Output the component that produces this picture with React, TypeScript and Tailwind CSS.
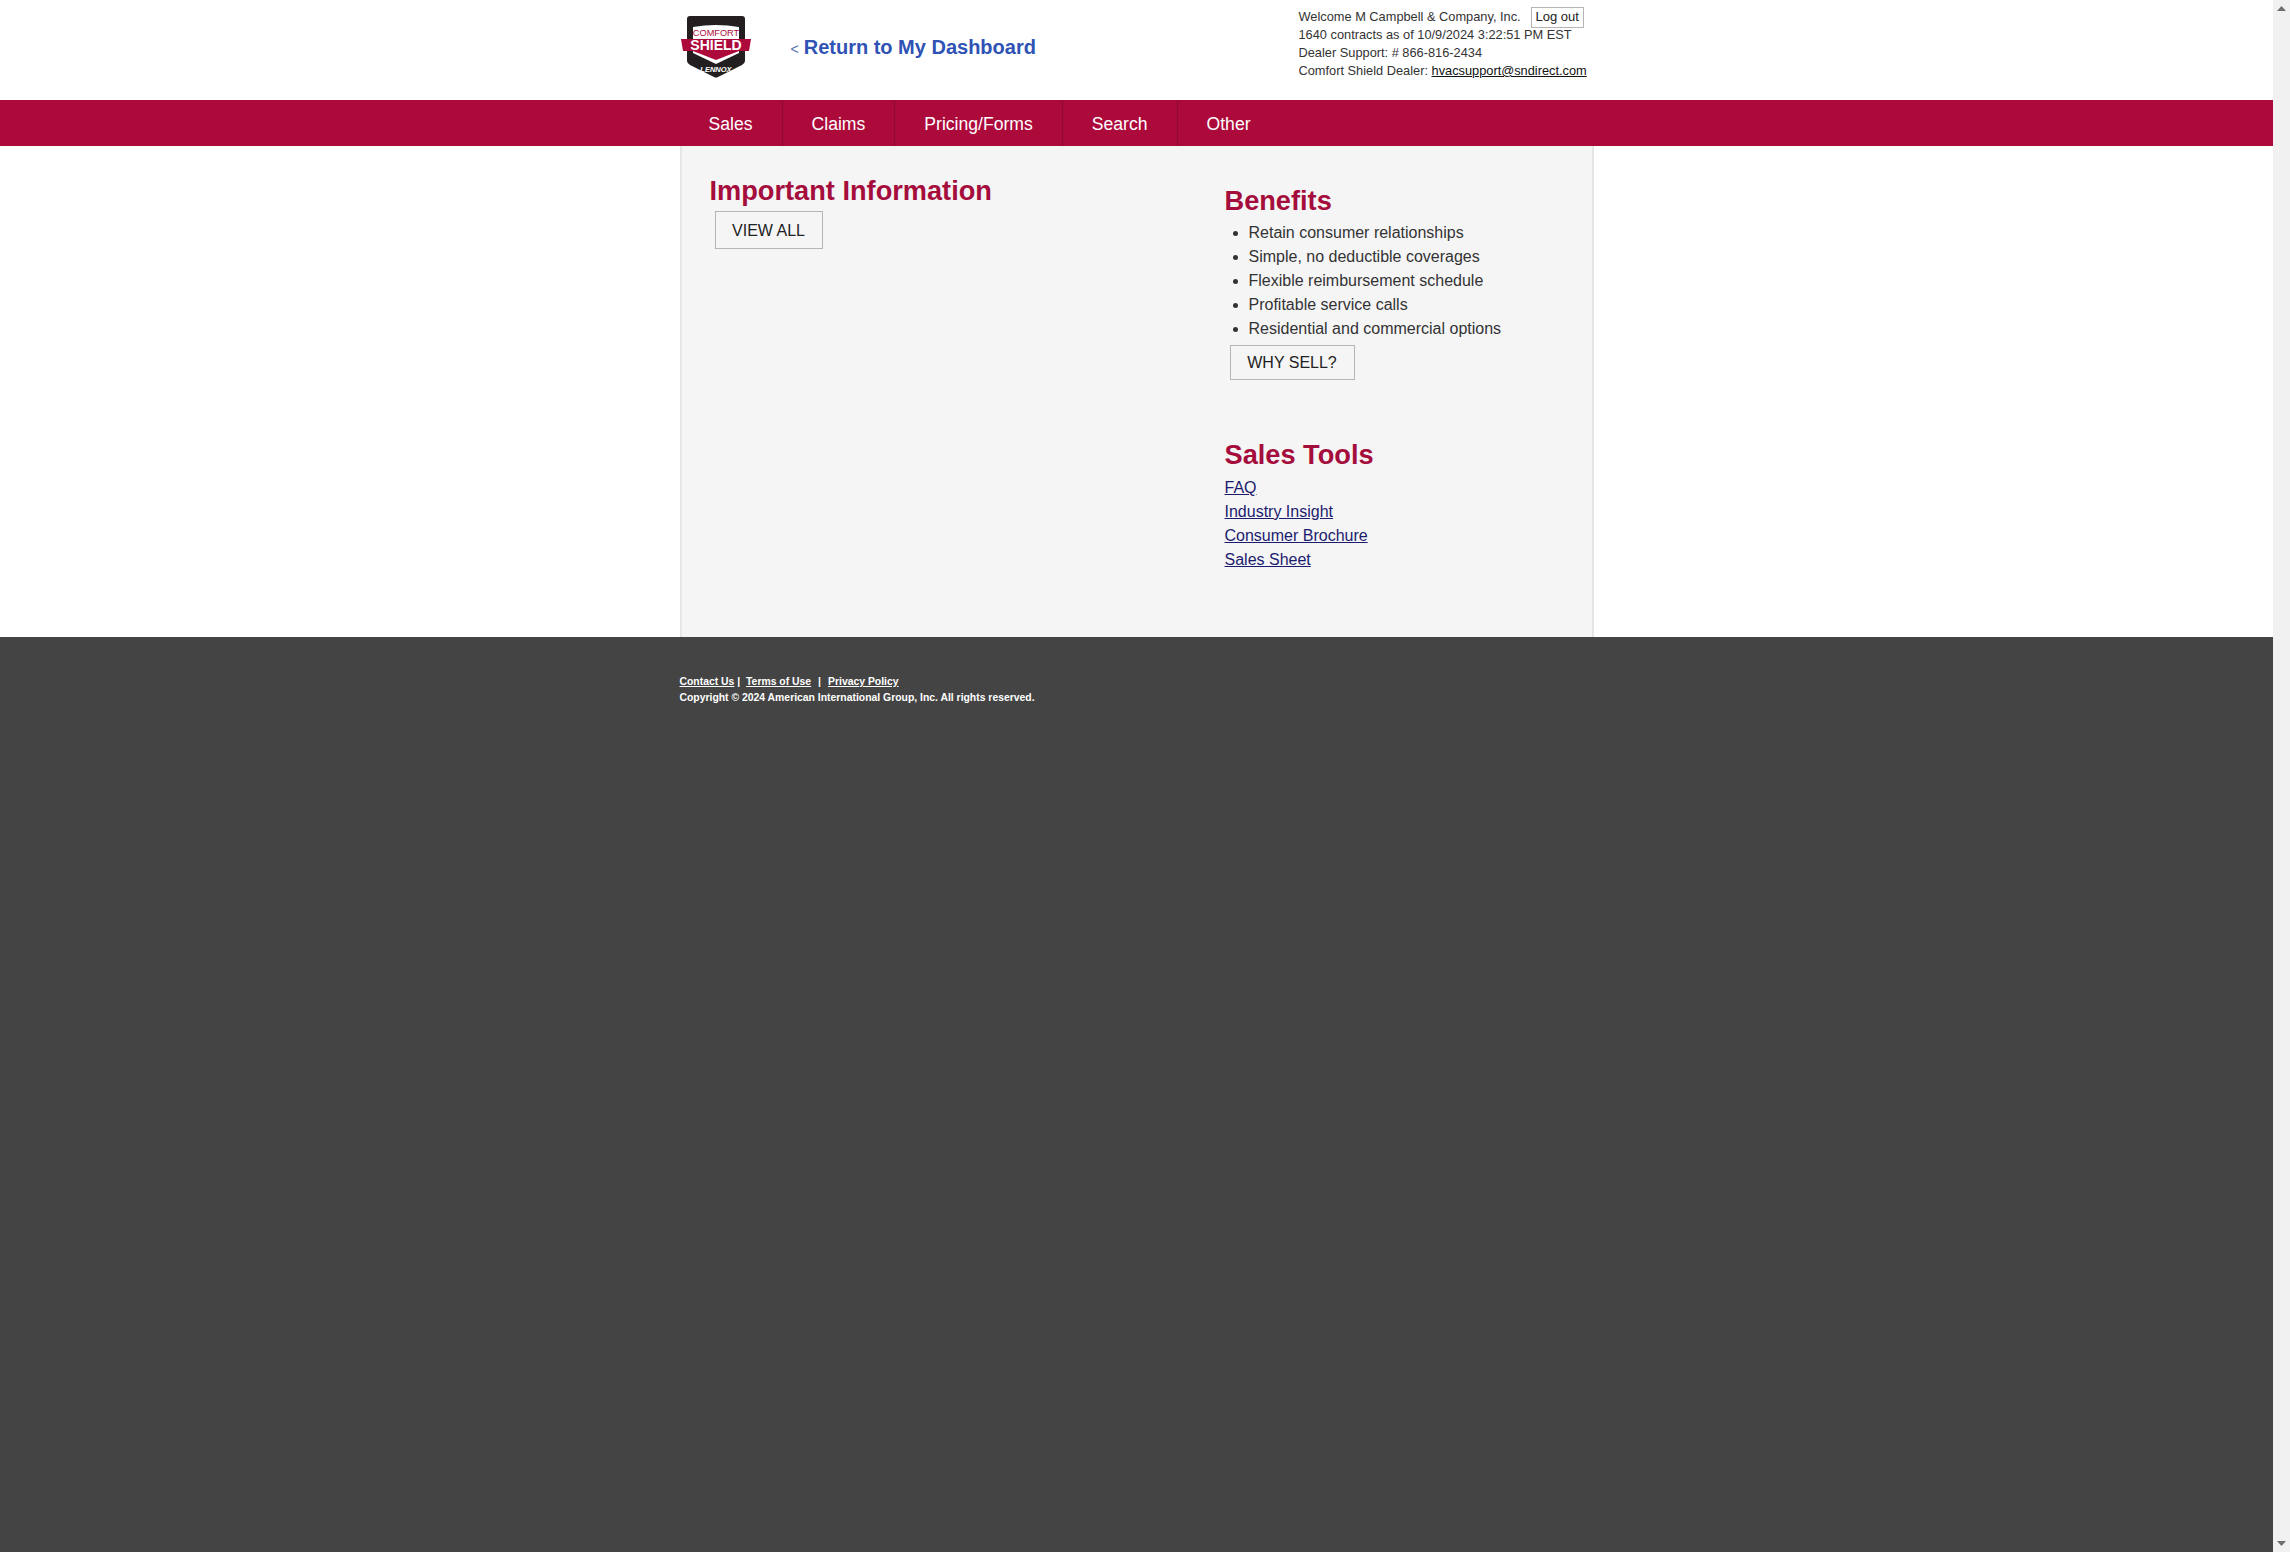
const navItems = ["Sales", "Claims", "Pricing/Forms", "Search", "Other"];

const benefits = [
  "Retain consumer relationships",
  "Simple, no deductible coverages",
  "Flexible reimbursement schedule",
  "Profitable service calls",
  "Residential and commercial options",
];

const salesTools = ["FAQ", "Industry Insight", "Consumer Brochure", "Sales Sheet"];

function ShieldLogo() {
  return (
    <svg width="72" height="64" viewBox="0 0 72 64" className="block">
      <path d="M7 4 Q7 1 10 1 L62 1 Q65 1 65 4 L65 46 Q65 48 62 50 L38 62 Q36 63 34 62 L10 50 Q7 48 7 46 Z" fill="#231f20" />
      <path d="M13 12 Q36 8 59 12 L59 38 L36 49 L13 38 Z" fill="#ffffff" />
      <path d="M1 24 L71 24 L69 36 L59 36 L36 45 L13 36 L3 36 Z" fill="#ad0a3c" />
      <text x="36" y="21" textAnchor="middle" className="text-[9.2px]" fill="#ad0a3c">COMFORT</text>
      <text x="36" y="35" textAnchor="middle" className="text-[14px] font-bold" fill="#ffffff">SHIELD</text>
      <text x="36" y="57" textAnchor="middle" className="text-[7.5px] font-bold italic" fill="#ffffff">LENNOX</text>
    </svg>
  );
}

function OutlineButton({ label, className }: { label: string; className: string }) {
  return (
    <button type="button" className={`block border border-[#b5b5b5] text-[16px] text-[#222] ${className}`}>
      {label}
    </button>
  );
}

function Header() {
  return (
    <header className="h-[100px] bg-white">
      <div className="mx-auto flex h-full w-[914px] items-start">
        <div className="mt-[15px] w-[111px]">
          <ShieldLogo />
        </div>
        <a href="#" className="mt-[34px] flex items-baseline text-[#2f52b5]">
          <span className="mr-[5px] text-[14px] text-[#5570b0]">&lt;</span>
          <span className="text-[20px] font-bold leading-[26px]">Return to My Dashboard</span>
        </a>
        <div className="ml-auto mt-[8px] w-[295px] text-[12.8px] leading-[18px] text-[#333]">
          <div className="flex h-[18px] items-center">
            <span>Welcome M Campbell &amp; Company, Inc.</span>
            <button type="button" className="ml-[10px] h-[21px] w-[53px] border border-[#b5b5b5] text-[13px] leading-[18px] text-[#222]">
              Log out
            </button>
          </div>
          <p>1640 contracts as of 10/9/2024 3:22:51 PM EST</p>
          <p>Dealer Support: # 866-816-2434</p>
          <p className="whitespace-nowrap">
            Comfort Shield Dealer:{" "}
            <a href="#" className="text-[#111] underline">hvacsupport@sndirect.com</a>
          </p>
        </div>
      </div>
    </header>
  );
}

function Nav() {
  return (
    <nav className="h-[46px] bg-[#ad0a3c]">
      <ul className="mx-auto flex h-full w-[914px]">
        {navItems.map((item) => (
          <li key={item} className="flex items-center border-r border-[#8f0a33] px-[29px] pt-[2px] text-[17.6px] text-white last:border-r-0">
            {item}
          </li>
        ))}
      </ul>
    </nav>
  );
}

function Content() {
  return (
    <section className="mx-auto flex h-[491px] w-[914px] border-x-2 border-[#e6e6e6] bg-[#f5f5f6]">
      <div className="w-[543px] pl-[28px] pt-[29px]">
        <h2 className="text-[27.2px] font-bold leading-[32px] text-[#a50d3c]">Important Information</h2>
        <OutlineButton label="VIEW ALL" className="ml-[5px] mt-[4px] h-[38px] w-[108px] pt-[2px]" />
      </div>
      <div className="pt-[39px]">
        <h2 className="text-[27.2px] font-bold leading-[32px] text-[#a50d3c]">Benefits</h2>
        <ul className="mt-[4px] list-disc pl-[24px] text-[16px] leading-[24px] text-[#333]">
          {benefits.map((benefit) => (
            <li key={benefit}>{benefit}</li>
          ))}
        </ul>
        <OutlineButton label="WHY SELL?" className="ml-[5px] mt-[4px] h-[35px] w-[125px]" />
        <h2 className="mt-[59px] text-[27.2px] font-bold leading-[32px] text-[#a50d3c]">Sales Tools</h2>
        <ul className="mt-[5px] text-[16px] leading-[24px]">
          {salesTools.map((tool) => (
            <li key={tool}>
              <a href="#" className="text-[#1c1c6e] underline">{tool}</a>
            </li>
          ))}
        </ul>
      </div>
    </section>
  );
}

function Footer() {
  return (
    <footer className="flex-1 bg-[#444444]">
      <div className="mx-auto w-[914px] pt-[37px] text-[10.4px] font-bold leading-[16px] text-white">
        <p>
          <a href="#" className="underline">Contact Us</a>
          <span> | </span>
          <a href="#" className="ml-[3px] underline">Terms of Use</a>
          <span className="mx-[7px]">|</span>
          <a href="#" className="underline">Privacy Policy</a>
        </p>
        <p>Copyright © 2024 American International Group, Inc. All rights reserved.</p>
      </div>
    </footer>
  );
}

export default function App() {
  return (
    <div className="flex h-[1552px] overflow-hidden font-['Liberation_Sans',Arial,sans-serif]">
      <main className="flex min-w-0 flex-1 flex-col">
        <Header />
        <Nav />
        <Content />
        <Footer />
      </main>
      <div className="flex w-[17px] flex-col items-center justify-between bg-[#f1f1f1] py-[6px]">
        <svg width="9" height="5" viewBox="0 0 9 5"><path d="M4.5 0 L9 5 L0 5 Z" fill="#707070" /></svg>
        <svg width="9" height="5" viewBox="0 0 9 5"><path d="M0 0 L9 0 L4.5 5 Z" fill="#707070" /></svg>
      </div>
    </div>
  );
}
